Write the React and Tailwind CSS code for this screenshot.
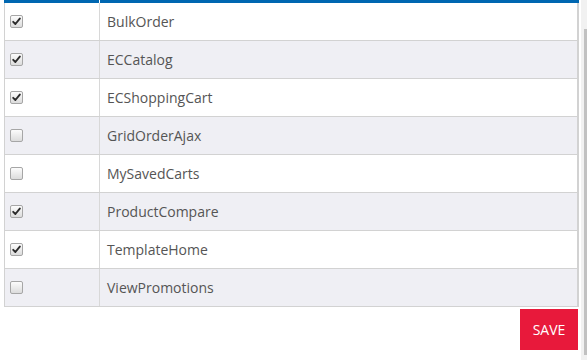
import React, { useState } from 'react';

const initialModules = [
  { name: 'BulkOrder', enabled: true },
  { name: 'ECCatalog', enabled: true },
  { name: 'ECShoppingCart', enabled: true },
  { name: 'GridOrderAjax', enabled: false },
  { name: 'MySavedCarts', enabled: false },
  { name: 'ProductCompare', enabled: true },
  { name: 'TemplateHome', enabled: true },
  { name: 'ViewPromotions', enabled: false },
];

// old-style grey checkbox
const Check = ({ checked, onClick }) => (
  <button
    onClick={onClick}
    className="w-[13px] h-[13px] rounded-[2px] border border-[#a6a6a6] bg-gradient-to-b from-[#fcfcfc] to-[#dcdcdc] flex items-center justify-center p-0"
  >
    {checked && (
      <svg width="9" height="9" viewBox="0 0 9 9">
        <path d="M1.2 4.8 L3.4 7 L7.8 1.6" fill="none" stroke="#2b2b2b" strokeWidth="1.9" strokeLinecap="round" strokeLinejoin="round" />
      </svg>
    )}
  </button>
);

export default function App() {
  const [modules, setModules] = useState(initialModules);

  const toggle = (idx) => {
    setModules(prev => prev.map((m, i) => (i === idx ? { ...m, enabled: !m.enabled } : m)));
  };

  return (
    <div className="relative w-[587px] h-[360px] overflow-hidden bg-white" style={{ fontFamily: '"Open Sans", "Noto Sans", sans-serif' }}>
      <div className="ml-[4px] w-[575px]">
        {/* header stripe */}
        <div className="flex h-[3px]">
          <div className="w-[95px] bg-[#0067b1]" />
          <div className="w-[1px] bg-white" />
          <div className="flex-1 bg-[#0067b1]" />
        </div>
        <div className="border-l border-r-2 border-[#d2d2d2]">
          {modules.map((m, idx) => (
            <div
              key={m.name}
              className={`flex h-[38px] border-b border-[#d2d2d2] ${idx % 2 === 1 ? 'bg-[#efeff4]' : 'bg-white'}`}
            >
              <div className="w-[95px] border-r border-[#d8d8d8] flex items-center pl-[5px]">
                <Check checked={m.enabled} onClick={() => toggle(idx)} />
              </div>
              <div className="flex-1 flex items-center pl-[7px] text-[14px] text-[#555]">
                {m.name}
              </div>
            </div>
          ))}
        </div>
        <div className="flex justify-end mt-[2px]">
          <button className="w-[58px] h-[41px] bg-[#e8193b] text-white text-[14px] mr-[1px]">SAVE</button>
        </div>
      </div>
      {/* scrollbar */}
      <div className="absolute top-0 right-0 w-[6px] h-full bg-[#f1f1f1]">
        <div className="absolute right-0 top-[29px] w-[3px] h-[326px] bg-[#c1c1c1]" />
      </div>
    </div>
  );
}
